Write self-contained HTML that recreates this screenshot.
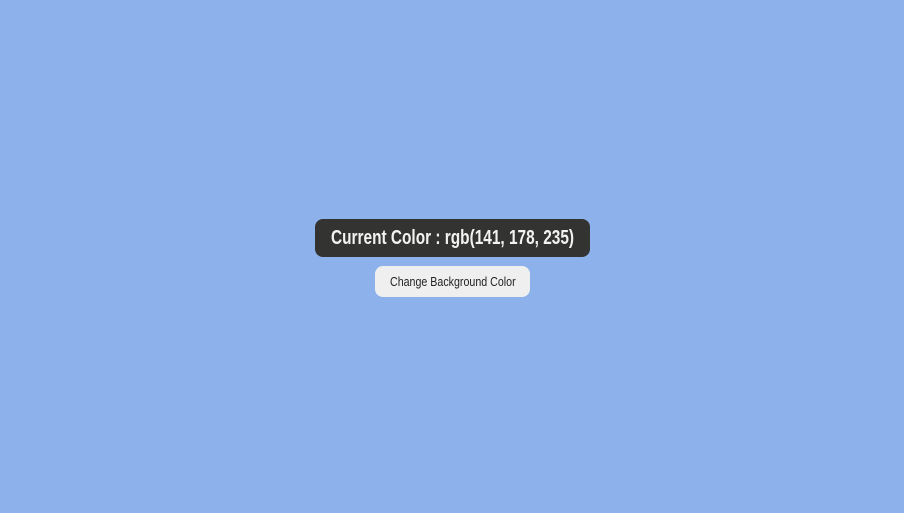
<!DOCTYPE html>
<html><head><style>
html,body{margin:0;width:904px;height:513px;background:rgb(141,178,235);overflow:hidden;font-family:"Liberation Sans",sans-serif}
.box{position:absolute;left:315px;top:219px;width:275px;height:38px;background:#333331;border-radius:8px;color:#f2f2f2;font-weight:bold;font-size:20px;line-height:38px;white-space:nowrap}
.btn{position:absolute;left:375px;top:266px;width:155px;height:31px;background:#efefef;border-radius:8px;color:#222;font-size:13px;line-height:32px;white-space:nowrap}
span{position:absolute;top:0;transform-origin:0 50%}
.box span{left:16px;transform:scaleX(0.77)}
.btn span{left:15px;transform:scaleX(0.82)}
</style></head><body>
<div class="box"><span>Current Color : rgb(141, 178, 235)</span></div>
<div class="btn"><span>Change Background Color</span></div>
</body></html>
